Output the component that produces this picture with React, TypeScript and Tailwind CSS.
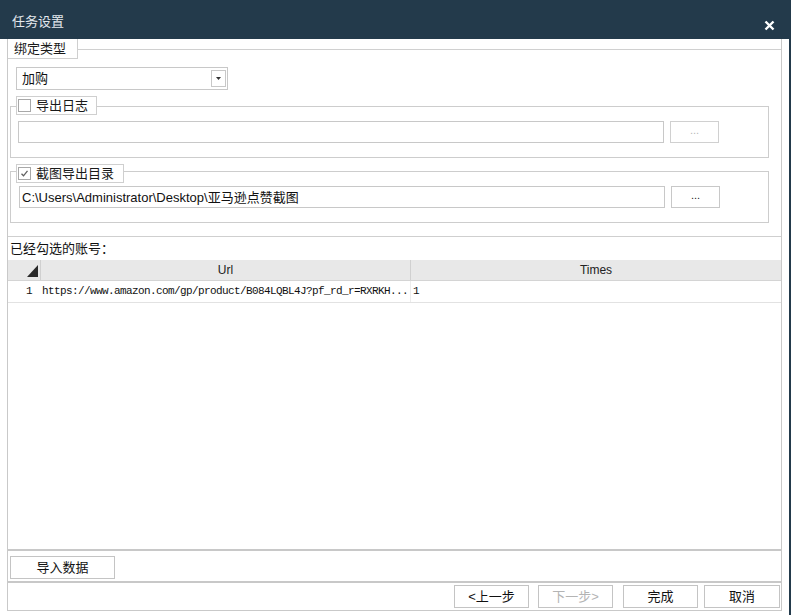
import React from "react";

const FONT = { fontFamily: '"Liberation Sans", "Noto Sans CJK SC", sans-serif' };

function Checkbox({ checked }: { checked?: boolean }) {
  return (
    <div className="w-[13px] h-[13px] border border-[#a8a8a8] bg-white flex items-center justify-center shrink-0">
      {checked && (
        <svg width="9" height="9" viewBox="0 0 9 9">
          <path d="M1.5 4.8 L3.5 6.8 L7.5 1.8" stroke="#606060" strokeWidth="1.3" fill="none" />
        </svg>
      )}
    </div>
  );
}

function Btn({ children, disabled, className }: { children: React.ReactNode; disabled?: boolean; className: string }) {
  return (
    <div
      className={`h-[23px] border border-[#c4c4c4] bg-white flex items-center justify-center text-[13px] leading-none ${
        disabled ? "text-[#b4b4b4]" : "text-[#111]"
      } ${className}`}
    >
      {children}
    </div>
  );
}

export default function App() {
  return (
    <div className="w-[791px] h-[615px] bg-white flex flex-col overflow-hidden" style={FONT}>
      {/* title bar */}
      <div className="h-[39px] bg-[#233a4b] flex items-center justify-between pl-[12px] pr-[16px] shrink-0">
        <span className="text-[13px] text-[#e4e9ee] mt-[4px]">任务设置</span>
        <svg width="11" height="11" viewBox="0 0 11 11" className="mt-[11px]">
          <path d="M1.5 1.5 L9.5 9.5 M9.5 1.5 L1.5 9.5" stroke="#ffffff" strokeWidth="2.4" />
        </svg>
      </div>

      <div className="flex flex-1">
        <div className="w-[7px]" />
        {/* panel */}
        <div className="w-[775px] h-[572px] border-l border-r border-b border-[#c9c9c9] flex flex-col">
          {/* section A */}
          <div className="h-[198px] border-b border-[#cfcfcf] flex flex-col shrink-0">
            <div className="flex h-[20px] shrink-0">
              <div className="w-[70px] h-[20px] border-r border-b border-[#cfcfcf] flex items-center pl-[6px] text-[13px] text-[#1a1a1a] leading-none">
                绑定类型
              </div>
              <div className="flex-1 h-[11px] border-b border-[#d0d0d0]" />
            </div>
            {/* dropdown */}
            <div className="ml-[8px] mt-[8px] w-[212px] h-[23px] border border-[#c8c8c8] flex items-center justify-between pl-[5px] pr-[1px]">
              <span className="text-[13px] text-[#111] leading-none">加购</span>
              <div className="w-[15px] h-[17px] border border-[#c8c8c8] flex items-center justify-center">
                <svg width="5" height="3" viewBox="0 0 5 3">
                  <path d="M0 0 H5 L2.5 3 Z" fill="#333" />
                </svg>
              </div>
            </div>

            {/* group export log */}
            <div className="relative ml-[2px] mt-[6px] h-[62px]">
              <div className="absolute left-0 top-[10px] w-[759px] h-[52px] border border-[#cdcdcd] flex pl-[7px] pt-[14px] gap-[6px]">
                <div className="w-[646px] h-[22px] border border-[#c8c8c8]" />
                <div className="w-[49px] h-[22px] border border-[#d0d0d0] flex items-center justify-center text-[11px] text-[#b8b8b8] leading-none pb-[4px]">
                  ...
                </div>
              </div>
              <div className="absolute left-[6px] top-0 h-[19px] w-[81px] border border-[#cfcfcf] bg-white flex items-center gap-[5px] pl-[1px] text-[13px] text-[#1a1a1a] leading-none">
                <Checkbox />
                <span>导出日志</span>
              </div>
            </div>

            {/* group screenshot dir */}
            <div className="relative ml-[2px] mt-[6px] h-[59px]">
              <div className="absolute left-0 top-[7px] w-[759px] h-[52px] border border-[#cdcdcd] flex pl-[8px] pt-[14px] gap-[6px]">
                <div className="w-[646px] h-[22px] border border-[#c8c8c8] flex items-center pl-[2px] text-[13px] text-[#111] leading-none">
                  C:\Users\Administrator\Desktop\亚马逊点赞截图
                </div>
                <div className="w-[49px] h-[22px] border border-[#c8c8c8] flex items-center justify-center text-[11px] text-[#222] leading-none pb-[4px]">
                  ...
                </div>
              </div>
              <div className="absolute left-[6px] top-0 h-[19px] w-[108px] border border-[#cfcfcf] bg-white flex items-center gap-[5px] pl-[1px] text-[13px] text-[#1a1a1a] leading-none">
                <Checkbox checked />
                <span>截图导出目录</span>
              </div>
            </div>
          </div>

          {/* section B */}
          <div className="h-[23px] flex items-center pl-[2px] text-[13px] text-[#111] leading-none shrink-0">
            已经勾选的账号：
          </div>
          <div className="h-[291px] border-b-2 border-[#c8c8c8] flex flex-col shrink-0">
            <div className="h-[21px] bg-[#e8e8e8] border-b border-[#d4d4d4] flex text-[12px] text-[#222] leading-none shrink-0">
              <div className="w-[33px] border-r border-[#d0d0d0] flex items-end justify-end pr-[2px] pb-[3px]">
                <svg width="11" height="12" viewBox="0 0 11 12">
                  <path d="M11 0 V12 H0 Z" fill="#2a2a2a" />
                </svg>
              </div>
              <div className="w-[370px] border-r border-[#d0d0d0] flex items-center justify-center">Url</div>
              <div className="flex-1 flex items-center justify-center">Times</div>
            </div>
            <div
              className="h-[22px] border-b border-[#e2e2e2] flex items-center text-[11px] text-[#111] leading-none shrink-0"
              style={{ fontFamily: '"Liberation Mono", "Noto Sans CJK SC", monospace' }}
            >
              <div className="w-[33px] h-full flex items-center pl-[18px]">1</div>
              <div className="w-[370px] h-full flex items-center pl-[1px] border-r border-[#ececec] tracking-[-0.6px] whitespace-nowrap overflow-hidden">
                https://www.amazon.com/gp/product/B084LQBL4J?pf_rd_r=RXRKH...
              </div>
              <div className="flex-1 h-full flex items-center pl-[2px]">1</div>
            </div>
          </div>

          {/* section C */}
          <div className="h-[32px] border-b-2 border-[#c8c8c8] pt-[5px] pl-[2px] shrink-0">
            <Btn className="w-[105px]">导入数据</Btn>
          </div>

          {/* section D */}
          <div className="flex-1 flex justify-end items-start pt-[2px] pr-[1px]">
            <Btn className="w-[75px] mr-[9px]">&lt;上一步</Btn>
            <Btn disabled className="w-[75px] mr-[10px]">下一步&gt;</Btn>
            <Btn className="w-[75px] mr-[6px]">完成</Btn>
            <Btn className="w-[76px]">取消</Btn>
          </div>
        </div>
        <div className="w-[7px]" />
        <div className="w-[2px] bg-[#233a4b]" />
      </div>
    </div>
  );
}
